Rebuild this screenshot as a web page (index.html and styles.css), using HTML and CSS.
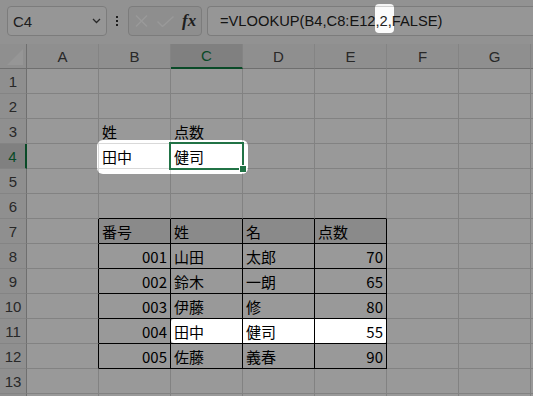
FILE: index.html
```html
<!DOCTYPE html>
<html lang="ja">
<head>
    <meta charset="UTF-8">
    <meta name="viewport" content="width=device-width, initial-scale=1.0">
    <title>VLOOKUP</title>
    <link rel="stylesheet" href="styles.css">
</head>
<body>
    <div class="bar">
        <div class="namebox">
            <span>C4</span>
            <svg class="chev" width="9" height="6" viewBox="0 0 9 6"><path d="M1 1l3.5 3.5L8 1" fill="none" stroke="#444" stroke-width="1.3"/></svg>
        </div>
        <div class="dots"><i></i><i></i><i></i></div>
        <div class="fxbox">
            <svg width="13" height="12" viewBox="0 0 13 12"><path d="M1 0.5l11 11M12 0.5l-11 11" stroke="#fff" stroke-width="1.4"/></svg>
            <svg width="17" height="11" viewBox="0 0 17 11"><path d="M0.5 5.5l5 5L16.5 0.5" fill="none" stroke="#fff" stroke-width="1.4"/></svg>
            <span class="fx">fx</span>
        </div>
        <div class="formula">=VLOOKUP(B4,C8:E12,<span class="arg">2</span>,FALSE)</div>
    </div>

    <div class="sheet">
        <div class="corner"></div>
        <div class="hd">A</div><div class="hd">B</div><div class="hd on">C</div><div class="hd">D</div>
        <div class="hd">E</div><div class="hd">F</div><div class="hd">G</div><div class="hd"></div>

        <div class="rh">1</div>
        <div class="c"></div><div class="c"></div><div class="c"></div><div class="c"></div><div class="c"></div><div class="c"></div><div class="c"></div><div class="c"></div>

        <div class="rh">2</div>
        <div class="c"></div><div class="c"></div><div class="c"></div><div class="c"></div><div class="c"></div><div class="c"></div><div class="c"></div><div class="c"></div>

        <div class="rh">3</div>
        <div class="c"></div><div class="c">姓</div><div class="c">点数</div><div class="c"></div><div class="c"></div><div class="c"></div><div class="c"></div><div class="c"></div>

        <div class="rh on">4</div>
        <div class="c"></div><div class="c">田中</div><div class="c sel">健司</div><div class="c"></div><div class="c"></div><div class="c"></div><div class="c"></div><div class="c"></div>

        <div class="rh">5</div>
        <div class="c"></div><div class="c"></div><div class="c"></div><div class="c"></div><div class="c"></div><div class="c"></div><div class="c"></div><div class="c"></div>

        <div class="rh">6</div>
        <div class="c"></div><div class="c tb"></div><div class="c tb"></div><div class="c tb"></div><div class="c tb"></div><div class="c"></div><div class="c"></div><div class="c"></div>

        <div class="rh">7</div>
        <div class="c tl"></div><div class="c t th">番号</div><div class="c t th">姓</div><div class="c t th">名</div><div class="c t th">点数</div><div class="c"></div><div class="c"></div><div class="c"></div>

        <div class="rh">8</div>
        <div class="c tl"></div><div class="c t n">001</div><div class="c t">山田</div><div class="c t">太郎</div><div class="c t n">70</div><div class="c"></div><div class="c"></div><div class="c"></div>

        <div class="rh">9</div>
        <div class="c tl"></div><div class="c t n">002</div><div class="c t">鈴木</div><div class="c t">一朗</div><div class="c t n">65</div><div class="c"></div><div class="c"></div><div class="c"></div>

        <div class="rh">10</div>
        <div class="c tl"></div><div class="c t n">003</div><div class="c t">伊藤</div><div class="c t">修</div><div class="c t n">80</div><div class="c"></div><div class="c"></div><div class="c"></div>

        <div class="rh">11</div>
        <div class="c tl"></div><div class="c t n">004</div><div class="c t">田中</div><div class="c t">健司</div><div class="c t n">55</div><div class="c"></div><div class="c"></div><div class="c"></div>

        <div class="rh">12</div>
        <div class="c tl"></div><div class="c t n">005</div><div class="c t">佐藤</div><div class="c t">義春</div><div class="c t n">90</div><div class="c"></div><div class="c"></div><div class="c"></div>

        <div class="rh">13</div>
        <div class="c"></div><div class="c"></div><div class="c"></div><div class="c"></div><div class="c"></div><div class="c"></div><div class="c"></div><div class="c"></div>

        <div class="rh"></div>
        <div class="c"></div><div class="c"></div><div class="c"></div><div class="c"></div><div class="c"></div><div class="c"></div><div class="c"></div><div class="c"></div>
    </div>

    <!-- dim layer with spotlight holes -->
    <svg class="shade" width="533" height="396">
        <defs>
            <mask id="holes">
                <rect width="533" height="396" fill="#fff"/>
                <rect x="375" y="4" width="19" height="29" rx="4" fill="#000"/>
                <rect x="97" y="140" width="151" height="34" rx="6" fill="#000"/>
                <rect x="171" y="319" width="216" height="24" rx="3" fill="#000"/>
            </mask>
        </defs>
        <rect width="533" height="396" fill="#000" fill-opacity="0.4" mask="url(#holes)"/>
    </svg>
</body>
</html>
```

FILE: styles.css
```css
body {
    margin: 0;
    width: 533px;
    height: 396px;
    overflow: hidden;
    background-color: #fff;
    font-family: "Liberation Sans", Arial, sans-serif;
    color: #222;
    position: relative;
}

.bar {
    display: flex;
    align-items: flex-start;
    height: 44px;
    box-sizing: border-box;
    padding: 6px 0 0 7px;
    background-color: #f4f4f4;
}

.namebox,
.fxbox,
.formula {
    height: 30px;
    box-sizing: border-box;
    border: 1px solid #cfcfcf;
    border-radius: 4px;
    background-color: #fbfbfb;
    display: flex;
    align-items: center;
}

.namebox {
    width: 100px;
    padding: 0 5px;
    justify-content: space-between;
    font-size: 15px;
    color: #333;
}

.dots {
    width: 2px;
    margin: 10px 10px 0 9px;
    display: flex;
    flex-direction: column;
    gap: 2px;
}

.dots i {
    display: block;
    width: 2px;
    height: 2px;
    background-color: #333;
}

.fxbox {
    width: 74px;
    padding: 0 0 0 6px;
    gap: 9px;
    background-color: #ededed;
}

.fx {
    font-family: "Liberation Serif", "Times New Roman", serif;
    font-style: italic;
    font-weight: bold;
    font-size: 17px;
    color: #333;
    margin-left: -1px;
}

.formula {
    flex: 1;
    margin-left: 5px;
    padding-left: 12px;
    border-right: none;
    border-radius: 4px 0 0 4px;
    font-size: 14.7px;
    color: #222;
    white-space: nowrap;
}

.sheet {
    display: grid;
    grid-template-columns: 27px repeat(7, 72px) 1fr;
    grid-auto-rows: 25px;
    font-family: "Noto Sans CJK JP", "Liberation Sans", sans-serif;
    font-size: 15px;
}

.corner,
.hd,
.rh {
    background-color: #efefef;
    box-sizing: border-box;
    border-right: 1px solid #dcdcdc;
    border-bottom: 1px solid #dcdcdc;
    font-family: "Liberation Sans", Arial, sans-serif;
    color: #444;
    display: flex;
    align-items: center;
    justify-content: center;
}

.hd {
    border-bottom-color: #b9b9b9;
    font-size: 15px;
}

.rh {
    border-right-color: #b9b9b9;
    font-size: 15px;
}

.corner {
    border-right-color: #b9b9b9;
    border-bottom-color: #b9b9b9;
    position: relative;
}

.corner::after {
    content: "";
    position: absolute;
    right: 3px;
    bottom: 3px;
    border-left: 16px solid transparent;
    border-bottom: 16px solid #fafafa;
}

.hd.on {
    background-color: #d6d6d6;
    color: #107c41;
    border-bottom: 2px solid #107c41;
}

.rh.on {
    background-color: #d6d6d6;
    color: #107c41;
    border-right: 2px solid #107c41;
}

.c {
    box-sizing: border-box;
    border-right: 1px solid #d9d9d9;
    border-bottom: 1px solid #d9d9d9;
    padding: 0 3px;
    display: flex;
    align-items: center;
    white-space: nowrap;
    color: #000;
}

.c.t {
    border-right-color: #000;
    border-bottom-color: #000;
}

.c.tb {
    border-bottom-color: #000;
}

.c.tl {
    border-right-color: #000;
}

.c.th {
    background-color: #e7e6e6;
}

.c.n {
    justify-content: flex-end;
}

.c.sel {
    position: relative;
}

.c.sel::before {
    content: "";
    position: absolute;
    top: -2px;
    left: -2px;
    right: -2px;
    bottom: -2px;
    border: 2px solid #217346;
}

.c.sel::after {
    content: "";
    position: absolute;
    right: -5px;
    bottom: -5px;
    width: 6px;
    height: 6px;
    background-color: #217346;
    border: 1px solid #fff;
}

.shade {
    position: absolute;
    top: 0;
    left: 0;
    pointer-events: none;
}
```
